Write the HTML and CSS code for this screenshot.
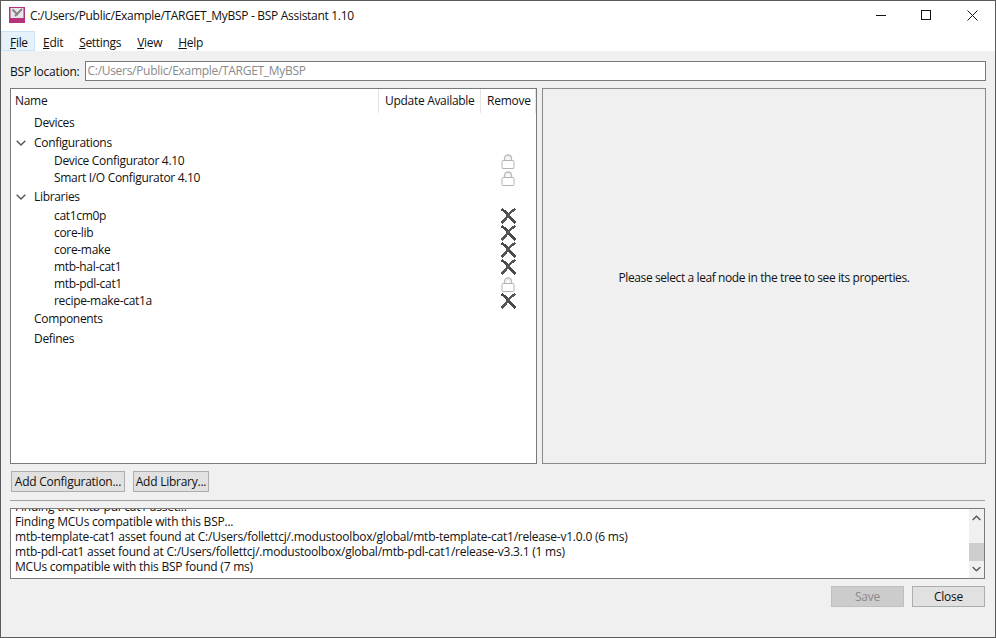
FILE: index.html
```html
<!DOCTYPE html>
<html>
<head>
  <title>BSP Assistant</title>
  <link rel="stylesheet" href="styles.css">
</head>
<body>

<svg class="defs" width="0" height="0">
  <symbol id="lock" viewBox="0 0 14 15">
    <path d="M3.500 7V4.500C3.500 2.400 5 1 7 1s3.500 1.400 3.500 3.500V7" fill="none" stroke="#bdbdbd" stroke-width="1.300"/>
    <path d="M5 7V4.800C5 3.400 5.800 2.600 7 2.600s2 .8 2 2.200V7" fill="none" stroke="#e2e2e2"/>
    <rect x="1" y="6.500" width="12" height="8" rx="1" fill="#fff" stroke="#b4b4b4"/>
  </symbol>
  <symbol id="cross" viewBox="0 0 17 16">
    <path d="M1.500 1C5 3 6.500 4.500 8.500 7.500 11 11 13 13 15.500 15" fill="none" stroke="#4a4a4a" stroke-width="2.700" shape-rendering="crispEdges"/>
    <path d="M15.500 1C11 3 9.500 5 8 7.500 6 10.500 4 13 1.500 15" fill="none" stroke="#555" stroke-width="2.500" shape-rendering="crispEdges"/>
  </symbol>
  <symbol id="arrow" viewBox="0 0 10 6">
    <path d="M.7.7 5 5 9.300.7" fill="none" stroke="#555" stroke-width="1.400"/>
  </symbol>
</svg>

<div class="window">
  <div class="titlebar">
    <svg class="appicon" width="16" height="16" viewBox="0 0 16 16">
      <rect width="16" height="16" fill="#b5317a"/>
      <rect x="1.500" y="1" width="13" height="10" fill="#e6e6e6"/>
      <path d="M3.500 2.500 9 8M13 2 6 9" stroke="#808080" stroke-width="1.800"/>
    </svg>
    <span class="title">C:/Users/Public/Example/TARGET_MyBSP - BSP Assistant 1.10</span>
    <div class="controls">
      <svg width="11" height="11" viewBox="0 0 11 11"><path d="M0 5.500H10" stroke="#111"/></svg>
      <svg width="11" height="11" viewBox="0 0 11 11"><rect x=".5" y=".5" width="9" height="9" fill="none" stroke="#111"/></svg>
      <svg width="11" height="11" viewBox="0 0 11 11"><path d="M.5.500 10.500 10.500M10.500.500 .5 10.500" stroke="#111"/></svg>
    </div>
  </div>

  <div class="menubar">
    <span class="menu active"><u>F</u>ile</span>
    <span class="menu"><u>E</u>dit</span>
    <span class="menu"><u>S</u>ettings</span>
    <span class="menu"><u>V</u>iew</span>
    <span class="menu"><u>H</u>elp</span>
  </div>

  <div class="content">
    <div class="location">
      <label>BSP location:</label>
      <div class="field">C:/Users/Public/Example/TARGET_MyBSP</div>
    </div>

    <div class="panes">
      <div class="tree">
        <div class="tree-head">
          <div class="col-name">Name</div>
          <div class="col-update">Update Available</div>
          <div class="col-remove">Remove</div>
        </div>
        <div class="row group">Devices</div>
        <div class="row group tight"><svg class="twisty"><use href="#arrow"/></svg>Configurations</div>
        <div class="row leaf">Device Configurator 4.10<svg class="act"><use href="#lock"/></svg></div>
        <div class="row leaf">Smart I/O Configurator 4.10<svg class="act"><use href="#lock"/></svg></div>
        <div class="row group pushed"><svg class="twisty"><use href="#arrow"/></svg>Libraries</div>
        <div class="row leaf">cat1cm0p<svg class="act x"><use href="#cross"/></svg></div>
        <div class="row leaf">core-lib<svg class="act x"><use href="#cross"/></svg></div>
        <div class="row leaf">core-make<svg class="act x"><use href="#cross"/></svg></div>
        <div class="row leaf">mtb-hal-cat1<svg class="act x"><use href="#cross"/></svg></div>
        <div class="row leaf">mtb-pdl-cat1<svg class="act"><use href="#lock"/></svg></div>
        <div class="row leaf">recipe-make-cat1a<svg class="act x"><use href="#cross"/></svg></div>
        <div class="row group">Components</div>
        <div class="row group">Defines</div>
      </div>
      <div class="props">Please select a leaf node in the tree to see its properties.</div>
    </div>

    <div class="actions">
      <button class="btn add-config">Add Configuration...</button>
      <button class="btn add-lib">Add Library...</button>
    </div>

    <div class="rule"></div>

    <div class="log">
      <div class="log-text">
        <div>Finding the mtb-pdl-cat1 asset...</div>
        <div>Finding MCUs compatible with this BSP...</div>
        <div>mtb-template-cat1 asset found at C:/Users/follettcj/.modustoolbox/global/mtb-template-cat1/release-v1.0.0 (6 ms)</div>
        <div>mtb-pdl-cat1 asset found at C:/Users/follettcj/.modustoolbox/global/mtb-pdl-cat1/release-v3.3.1 (1 ms)</div>
        <div>MCUs compatible with this BSP found (7 ms)</div>
      </div>
      <div class="scrollbar">
        <svg width="9" height="6" viewBox="0 0 10 6"><path d="M.7 5.300 5 1 9.300 5.300" fill="none" stroke="#555" stroke-width="1.600"/></svg>
        <div class="thumb"></div>
        <svg width="9" height="6" viewBox="0 0 10 6"><use href="#arrow"/></svg>
      </div>
    </div>

    <div class="footer">
      <button class="btn wide" disabled>Save</button>
      <button class="btn wide">Close</button>
    </div>
  </div>
</div>

</body>
</html>
```

FILE: styles.css
```css
html, body {
  margin: 0;
  background: #f0f0f0;
}
body {
  font-family: 'Open Sans', 'Noto Sans', sans-serif;
  font-size: 12px;
  color: #111;
  overflow: hidden;
}
.defs {
  display: block;
  height: 0;
}
.window {
  box-sizing: border-box;
  width: 996px;
  height: 638px;
  border: 1px solid #5b5b5b;
  display: flex;
  flex-direction: column;
  overflow: hidden;
}
.titlebar {
  height: 30px;
  flex: none;
  background: #fff;
  display: flex;
  align-items: center;
  padding-left: 8px;
  padding-bottom: 2px;
  box-sizing: border-box;
}
.appicon {
  margin-right: 5px;
}
.title {
  letter-spacing: -0.3px;
}
.controls {
  margin-left: auto;
  display: flex;
  gap: 34px;
  margin-right: 17px;
}
.controls svg:last-child {
  margin-left: 1px;
}
.menubar {
  height: 20px;
  flex: none;
  background: #fff;
  display: flex;
}
.menu {
  padding: 2px 0 0 0;
  margin-left: 16px;
  box-sizing: border-box;
  border: 1px solid transparent;
  border-width: 1px 0;
  letter-spacing: -0.3px;
}
.menu.active {
  background: #e5f1fb;
  border: 1px solid #cce4f7;
  margin-left: 0;
  width: 34px;
  padding: 2px 0 0 8px;
}
.menu.active + .menu {
  margin-left: 8px;
}
.content {
  flex: 1;
  display: flex;
  flex-direction: column;
  padding: 10px 9px 0 9px;
  min-height: 0;
}
.location {
  display: flex;
  align-items: center;
  height: 20px;
  gap: 5px;
}
.location label {
  letter-spacing: -0.22px;
}
.field {
  flex: 1;
  box-sizing: border-box;
  height: 20px;
  line-height: 18px;
  padding-left: 2px;
  background: #fff;
  border: 1px solid #7a7a7a;
  color: #8a8a8a;
  letter-spacing: -0.3px;
}
.panes {
  display: flex;
  gap: 5px;
  margin-top: 7px;
  height: 376px;
}
.tree {
  width: 527px;
  box-sizing: border-box;
  background: #fff;
  border: 1px solid #7a7a7a;
  flex: none;
}
.tree-head {
  display: flex;
  height: 24px;
  line-height: 24px;
  letter-spacing: -0.3px;
}
.col-name {
  width: 368px;
  padding-left: 4px;
  box-sizing: border-box;
  border-right: 1px solid #e5e5e5;
}
.col-update {
  width: 102px;
  padding-left: 6px;
  box-sizing: border-box;
  border-right: 1px solid #e5e5e5;
}
.col-remove {
  width: 55px;
  padding-left: 6px;
  box-sizing: border-box;
  border-right: 1px solid #e5e5e5;
  letter-spacing: -0.25px;
}
.row {
  position: relative;
  letter-spacing: -0.32px;
}
.group {
  height: 20px;
  line-height: 20px;
  padding-left: 23px;
}
.group.tight {
  height: 19px;
}
.group.pushed {
  margin-top: 1px;
}
.leaf {
  height: 17px;
  line-height: 17px;
  padding-left: 43px;
}
.twisty {
  position: absolute;
  left: 5px;
  top: 7px;
  width: 10px;
  height: 6px;
}
.act {
  position: absolute;
  left: 490px;
  top: 2px;
  width: 14px;
  height: 15px;
}
.act.x {
  left: 489px;
  top: 1px;
  width: 17px;
  height: 16px;
}
.props {
  flex: 1;
  box-sizing: border-box;
  background: #f0f0f0;
  border: 1px solid #8a8a8a;
  display: flex;
  align-items: center;
  justify-content: center;
  letter-spacing: -0.4px;
  padding-top: 3px;
}
.actions {
  display: flex;
  gap: 8px;
  margin-top: 7px;
  margin-left: 1px;
}
.btn {
  font: inherit;
  height: 21px;
  padding: 0;
  background: #e1e1e1;
  border: 1px solid #adadad;
  color: #111;
  letter-spacing: -0.25px;
  border-radius: 0;
}
.add-config {
  width: 114px;
}
.add-lib {
  width: 76px;
}
.btn.wide {
  width: 73px;
}
.btn[disabled] {
  background: #cccccc;
  border-color: #bfbfbf;
  color: #8a8a8a;
}
.rule {
  height: 1px;
  background: #a0a0a0;
  margin-top: 8px;
  margin-right: 1px;
}
.log {
  display: flex;
  height: 71px;
  margin-top: 7px;
  margin-right: 1px;
  box-sizing: border-box;
  background: #fff;
  border: 1px solid #7a7a7a;
}
.log-text {
  flex: 1;
  height: 69px;
  overflow: hidden;
  padding-left: 4px;
  line-height: 15px;
  letter-spacing: -0.22px;
  white-space: nowrap;
}
.log-text div:first-child {
  margin-top: -10px;
}
.scrollbar {
  width: 15px;
  background: #f0f0f0;
  display: flex;
  flex-direction: column;
  align-items: center;
  padding-top: 6px;
  box-sizing: border-box;
}
.thumb {
  width: 15px;
  height: 18px;
  flex: none;
  background: #cdcdcd;
  margin-top: 22px;
  margin-bottom: 5px;
}
.footer {
  display: flex;
  justify-content: flex-end;
  gap: 8px;
  margin-top: 7px;
  margin-right: 1px;
}
```
